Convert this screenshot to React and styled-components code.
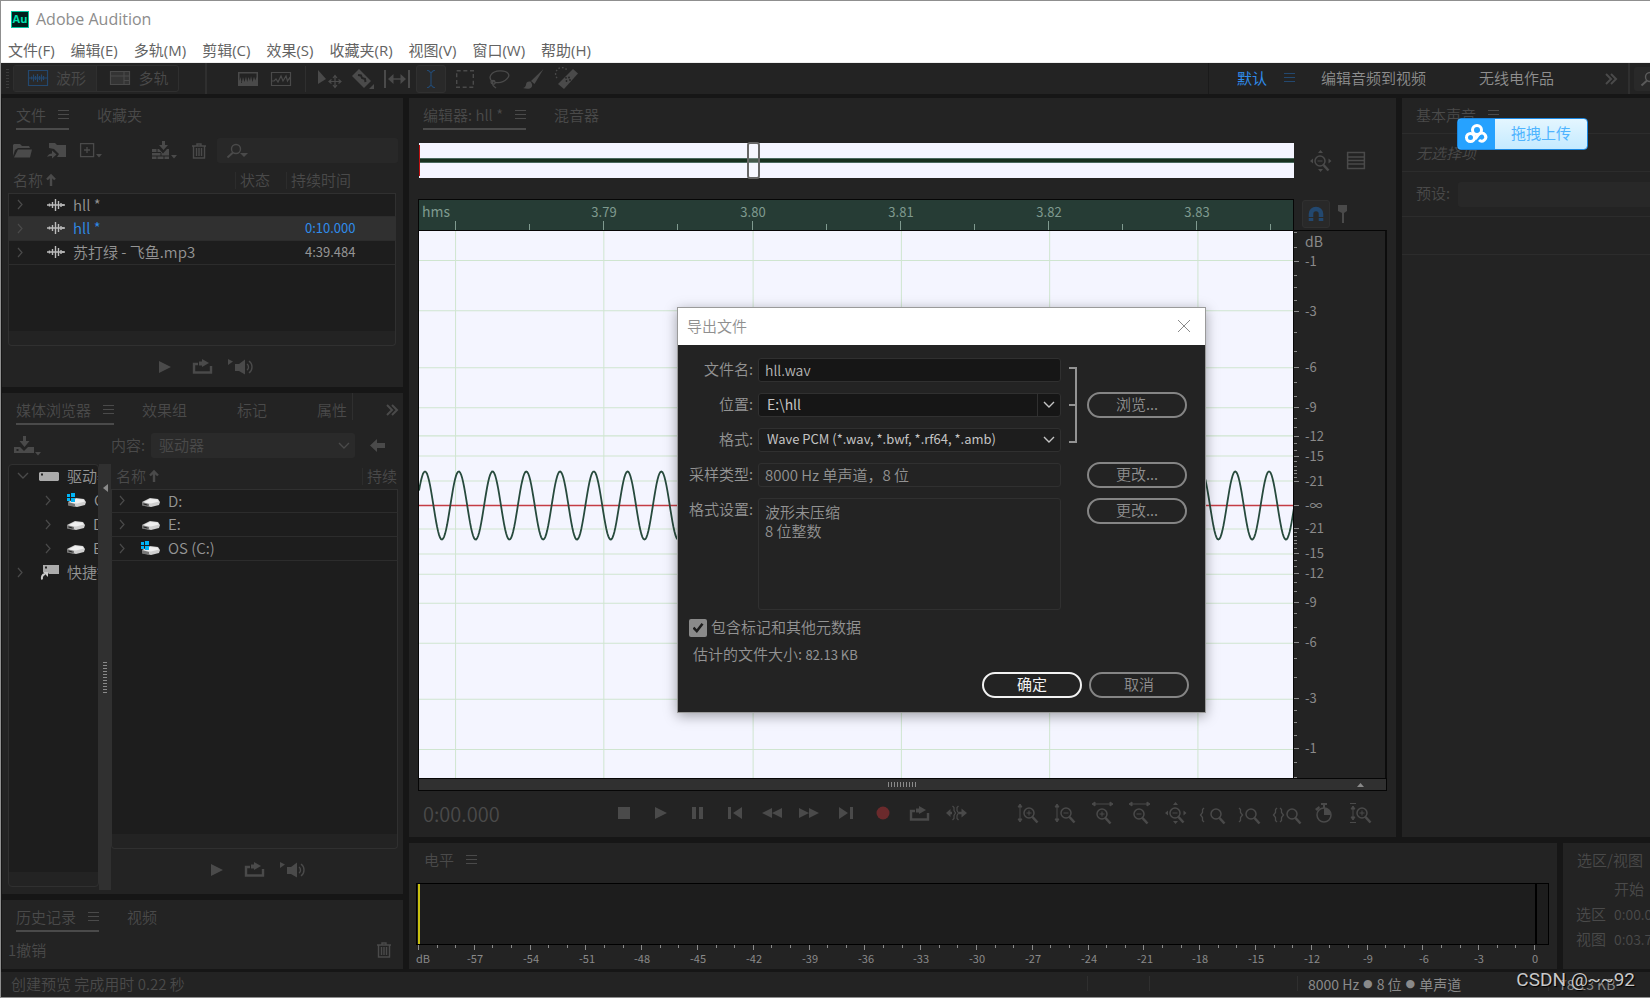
import React, { useState } from 'react'
import styled, { createGlobalStyle, css } from 'styled-components'

const GlobalStyle = createGlobalStyle`
  * {
    box-sizing: border-box;
  }

  body {
    margin: 0;
    background: #161616;
    color: #4a4a4a;
    font-family: "Noto Sans CJK SC", "Noto Sans", sans-serif;
    font-size: 15px;
    font-weight: 350;
    line-height: 20px;
  }

  button, input, select, textarea {
    font: inherit;
    color: inherit;
  }
`

/* ---------- icons ---------- */

const Svg = styled.svg`
  display: block;
  flex: none;
  overflow: visible;
`

const glass = (
  <>
    <circle cx="12" cy="10" r="5" fill="none" stroke="currentColor" strokeWidth="1.5" />
    <path d="M15.5 14l5 5.5" stroke="currentColor" strokeWidth="2.6" fill="none" />
  </>
)
const plus = <path d="M9.5 10h5M12 7.5v5" stroke="currentColor" fill="none" />
const minus = <path d="M9.5 10h5" stroke="currentColor" fill="none" />
const vArrow = <path d="M3 3v14M1 4l2-3 2 3zM1 16l2 3 2-3z" stroke="currentColor" fill="currentColor" />
const hArrow = <path d="M3 1h17M4-1L1 1l3 2zM19-1l3 2-3 2z" stroke="currentColor" fill="currentColor" />

const icons = {
  menu: [11, 11, <path d="M0 1.5h11M0 5.5h11M0 9.5h11" stroke="currentColor" />],
  chevrons: [12, 10, <path d="M1 0l5 5-5 5M6 0l5 5-5 5" fill="none" stroke="currentColor" strokeWidth="2" />],
  right: [5, 9, <path d="M0 0l4 4.500-4 4.500" fill="none" stroke="currentColor" strokeWidth="1.2" />],
  down: [10, 6, <path d="M0 0l5 5 5-5" fill="none" stroke="currentColor" strokeWidth="1.4" />],
  up: [10, 12, <path d="M5 12V2M1 5.500l4-4 4 4" fill="none" stroke="currentColor" strokeWidth="2.4" />],
  waveform: [20, 16, <path d="M.5.5h19v15H.5zM1 8h18M3.500 6.500v3M5.500 4.500v7M7.500 6v4M9.500 4v8M11.500 6v4M13.500 4.500v7M15.500 6v4" fill="none" stroke="currentColor" strokeWidth="1.2" />],
  multitrack: [20, 14, <><path d="M0 0h20v14H0z" fill="currentColor" opacity=".45" /><path d="M.5.5h19v13H.5zM0 5h20M14 5V0M14 9.500h6M14 5v9" fill="none" stroke="currentColor" strokeWidth="1.2" /></>],
  spectral: [20, 14, <path fillRule="evenodd" d="M0 0h20v14H0zM1.500 1.500V9l1-4 1.200 6L5 5l1.500 5L8 4.500l1.200 5.500L10.500 5l1.500 4 1-5 1.500 6L16 4.500l1.200 4L18.500 5V1.500z" fill="currentColor" />],
  pitch: [20, 14, <path d="M.5.5h19v13H.5zM1 9h2l2-2 2 3 3-6 2 5 3-5 1.500 5 2-3 1 2" fill="none" stroke="currentColor" strokeWidth="1.2" />],
  move: [23, 18, <><path d="M0 0v14l8-5z" fill="currentColor" /><path d="M17 6v11M11.500 11.500h11M15 8l2-2.500L19 8M15 15l2 2.500 2-2.500M13.500 9.500l-2.500 2 2.500 2M20.500 9.500l2.500 2-2.500 2" fill="none" stroke="currentColor" strokeWidth="1.2" /></>],
  razor: [22, 20, <><path d="M7 0l12 12-7 7L0 7z" fill="currentColor" /><path d="M6 6l3 .5 1 2.500 3 1 .5 3" fill="none" stroke="#232323" strokeWidth="2" /><path d="M22 15v5h-5z" fill="currentColor" /></>],
  slip: [26, 18, <><path d="M1 0v18M25 0v18" stroke="currentColor" strokeWidth="2" /><path d="M6 9h14" stroke="currentColor" strokeWidth="1.5" /><path d="M9.500 4L4 9l5.500 5zM16.500 4L22 9l-5.500 5z" fill="currentColor" /></>],
  ibeam: [10, 18, <path d="M1 .5h1.500L5 3 7.500.5H9M5 3v12M1 17.500h1.500L5 15l2.500 2.500H9" fill="none" stroke="currentColor" strokeWidth="1.2" />],
  marquee: [18, 18, <path d="M.7.7h16.600v16.600H.7z" fill="none" stroke="currentColor" strokeWidth="1.4" strokeDasharray="4 2.640" />],
  lasso: [21, 18, <path d="M4 12C-2 8 2 1 11 .8c8-.3 11 4.500 7 8-3 3-8 4.500-12 3.500M6 12c0-2-4-2-4 0s4 3 4 1-2-3-2.500 0S6 17 7 18" fill="none" stroke="currentColor" strokeWidth="1.3" />],
  brush: [21, 20, <><path d="M20.500 0L8 12l3.500 3z" fill="currentColor" /><path d="M7.500 12.500C4 12 3 14 3 16c-.5 2-2 3-3 3 6 2 11 0 8.500-5z" fill="currentColor" /></>],
  heal: [22, 20, <><path d="M17 0l5 4.500L8 20l-6-5z" fill="currentColor" /><circle cx="10.500" cy="12" r=".9" fill="#232323" /><circle cx="13" cy="8.500" r=".9" fill="#232323" /><circle cx="14" cy="11" r=".9" fill="#232323" /><circle cx="10" cy="8.800" r=".9" fill="#232323" /><path d="M1 9a6 6 0 0110-8" fill="none" stroke="currentColor" strokeWidth="1.4" strokeDasharray="1.500 2" /></>],
  open: [20, 14, <><path d="M0 12V1l1-1h6l2 2h7l1 2H5L2 6z" fill="currentColor" /><path d="M5 5.500h14l-2 8H1z" fill="currentColor" /></>],
  importFile: [20, 16, <><path d="M2 5V0h6l2 2h9v12h-9l2-3-5-5z" fill="currentColor" /><path d="M0 14c1-2.500 3-3.500 5-3.500V7.500l4.500 4-4.500 4V13c-2 0-3.500 0-5 1z" fill="currentColor" /></>],
  create: [22, 15, <><path d="M.6.6h13v13H.6zM7 4v6M4 7h6" fill="none" stroke="currentColor" strokeWidth="1.3" /><path d="M16 11h6l-3 3.500z" fill="currentColor" /></>],
  insert: [25, 19, <><path d="M0 8h7l4 4.500L15 8h2v10H0z" fill="currentColor" /><path d="M0 11.500h9M0 15h17M5 8v3M9 12v3M12 15v3M5 15v3" stroke="#232323" /><path d="M10 0h3v4h3l-4.500 5L7 4h3z" fill="currentColor" /><path d="M19 14h6l-3 3.500z" fill="currentColor" /></>],
  trash: [14, 16, <path d="M0 3h14M5 3V1h4v2M1.500 3v12h11V3M4.500 5v8M7 5v8M9.500 5v8" fill="none" stroke="currentColor" strokeWidth="1.4" />],
  search: [20, 14, <><circle cx="9" cy="5" r="4.500" fill="none" stroke="currentColor" strokeWidth="1.4" /><path d="M6 8.500L.5 13.500" stroke="currentColor" strokeWidth="2" /><path d="M13 9h8l-4 4z" fill="currentColor" /></>],
  audio: [18, 12, <path d="M0 6h18M2.500 4.500v3M5.500 3v6M8.500 0v12M11.500 2v8M14 4v4M16 5v2" fill="none" stroke="currentColor" strokeWidth="1.4" />],
  play: [12, 12, <path d="M0 0l12 6-12 6z" fill="currentColor" />],
  loop: [19, 15, <><path d="M5 5H1v8.500h17V7" fill="none" stroke="currentColor" strokeWidth="2.4" /><path d="M6 6.500V2.500h3V0l7 4-7 4V6.500z" fill="currentColor" /></>],
  speaker: [26, 16, <><path d="M0 0l5 2.500L0 6zM7 5h4l6-4.500v15L11 12H7z" fill="currentColor" /><path d="M19 5c2 1.500 2 5 0 6M21 2c4 3 4 9 0 12" fill="none" stroke="currentColor" strokeWidth="1.4" /></>],
  save: [27, 19, <><path d="M0 11h6l4 4 4-4h6v6H0z" fill="currentColor" /><path d="M2.500 14h2" stroke="#232323" strokeWidth="2" /><path d="M9 0h3v5h3.500l-5 6-5-6H9z" fill="currentColor" /><path d="M21 16h6l-3 3.500z" fill="currentColor" /></>],
  back: [15, 13, <path d="M0 6.500L7 0v4h8v5H7v4z" fill="currentColor" />],
  drives: [20, 9, <><path d="M1 0h18l1 1v7l-1 1H1L0 8V1z" fill="#ababab" /><path d="M2 2.500h2" stroke="#222" strokeWidth="2" /></>],
  shortcuts: [18, 15, <><path d="M2 0h16v9H8l-2-2H2z" fill="#ababab" /><path d="M4 2.500h2" stroke="#222" strokeWidth="2" /><path d="M1 14.500c-.5-3 1-5 3-5.500" fill="none" stroke="#ccc" strokeWidth="2" /><path d="M2 7h5v5z" fill="#ccc" /></>],
  disk: [18, 12, <><path d="M0 7l8-4 8 1 2 3-1 3-8 2-9-2z" fill="#cfcfcf" /><path d="M1 7.500l7-3.500 7 .500 2 2-8 2z" fill="#efefef" /><path d="M0 7l7 2v3l-7-1.500z" fill="#777" /><path d="M1.500 9l4 1" stroke="#222" /></>],
  osdisk: [19, 14, <><path d="M1 9l8-4 8 1 2 3-1 3-8 2-9-2z" fill="#cfcfcf" /><path d="M2 9.500l7-3.500 7 .500 2 2-8 2z" fill="#efefef" /><path d="M1 9l7 2v3l-7-1.500z" fill="#777" /><path d="M0 1h3v3H0zM4 0h4v4H4zM0 5h3v3H0zM4 5h4v4H4z" fill="#00b4f5" /></>],
  stop: [12, 12, <path d="M0 0h12v12H0z" fill="currentColor" />],
  pause: [11, 12, <path d="M0 0h4v12H0zM7 0h4v12H7z" fill="currentColor" />],
  first: [14, 12, <path d="M0 0h3v12H0zM14 0v12L5 6z" fill="currentColor" />],
  rewind: [20, 10, <path d="M10 0v10L0 5zM20 0v10L10 5z" fill="currentColor" />],
  forward: [20, 10, <path d="M0 0l10 5-10 5zM10 0l10 5-10 5z" fill="currentColor" />],
  last: [14, 12, <path d="M0 0l9 6-9 6zM11 0h3v12h-3z" fill="currentColor" />],
  record: [14, 14, <circle cx="7" cy="7" r="6.500" fill="#6b2a2c" />],
  skip: [21, 14, <><path d="M2 7h4M13 7h4" stroke="currentColor" strokeWidth="2.400" fill="none" /><path d="M4.500 3v8L0 7zM15.500 2.500L21 7l-5.500 4.500z" fill="currentColor" /><path d="M6.500 0l1.500 1.500v3L9.500 7 8 9.500v3L6.500 14M12.500 0L11 1.500v3L12.500 7 11 9.500v3l1.500 1.500" fill="none" stroke="currentColor" strokeWidth="1.200" /></>],
  zoomInV: [22, 20, <>{vArrow}{glass}{plus}</>],
  zoomOutV: [22, 20, <>{vArrow}{glass}{minus}</>],
  zoomInH: [22, 20, <>{hArrow}<g transform="translate(-1 1)">{glass}{plus}</g></>],
  zoomOutH: [22, 20, <>{hArrow}<g transform="translate(-1 1)">{glass}{minus}</g></>],
  zoomFull: [22, 20, <><g transform="translate(-2 0)">{glass}{minus}</g><path d="M8 2l2.500-3L13 2zM8 18l2.500 3 2.500-3zM3 7.500L0 10l3 2.500zM18.500 7.500l3 2.500-3 2.500z" fill="currentColor" /></>],
  zoomLeft: [25, 18, <><g transform="translate(4 0)">{glass}</g><path d="M4 4L2.500 5.500v3L.5 11l2 2.500v3L4 18" fill="none" stroke="currentColor" strokeWidth="1.300" /></>],
  zoomRight: [22, 18, <>{glass}<path d="M0 4l1.500 1.500v3l2 2.500-2 2.500v3L0 18" fill="none" stroke="currentColor" strokeWidth="1.300" /></>],
  zoomSel: [28, 18, <><g transform="translate(7 0)">{glass}</g><path d="M4 4L2.500 5.500v3L.5 11l2 2.500v3L4 18M7 4l1.500 1.500v3l2 2.500-2 2.500v3L7 18" fill="none" stroke="currentColor" strokeWidth="1.300" /></>],
  timer: [18, 20, <><circle cx="9" cy="12" r="7" fill="none" stroke="currentColor" strokeWidth="1.500" /><path d="M9 12V5a7 7 0 017 7zM6 0h6v2h-2v3H8V2H6zM0 6l4-3 1 2-3 3z" fill="currentColor" /></>],
  zoomReset: [22, 20, <><path d="M0 .5h6M0 19.500h6M3 4v12M1 6l2-3 2 3zM1 14l2 3 2-3z" stroke="currentColor" fill="currentColor" />{glass}{plus}</>],
  list: [18, 17, <path d="M.6.6h16.800v15.800H.6zM0 5h18M0 8.500h18M0 12h18" fill="none" stroke="currentColor" strokeWidth="1.500" />],
  magnet: [16, 16, <><path d="M3 15V8a5 5 0 0110 0v7" fill="none" stroke="currentColor" strokeWidth="4.600" /><path d="M0 11.500h6M10 11.500h6" stroke="#292929" /></>],
  pin: [9, 18, <path d="M0 0h9v6L6 8v10H4V8L0 6z" fill="currentColor" />],
  close: [12, 12, <path d="M0 0l12 12M12 0L0 12" stroke="#8a8a8a" />],
  bracket: [8, 76, <path d="M0 1h7v74H0M0 38h7" fill="none" stroke="currentColor" strokeWidth="2" />],
}

const Icon = ({ name }) => {
  const [w, h, body] = icons[name]
  return <Svg width={w} height={h} viewBox={`0 0 ${w} ${h}`} aria-hidden="true">{body}</Svg>
}

/* ---------- shell ---------- */

const Shell = styled.div`
  min-height: 100vh;
  display: flex;
  flex-direction: column;
  border: 1px solid #8f8f8f;
  border-right: 0;
  background: #161616;
  overflow: hidden;
`

const TitleBar = styled.header`
  display: flex;
  align-items: center;
  gap: 7px;
  height: 36px;
  padding-left: 10px;
  background: #fff;
  color: #8c8c8c;
  font: 400 16px/20px "Open Sans", "Noto Sans CJK SC", sans-serif;
`

const Logo = styled.span`
  width: 18px;
  height: 17px;
  border: 1px solid #00c8a0;
  background: #00201c;
  color: #00e0b0;
  font: 700 11px/14px "Open Sans", sans-serif;
  text-align: center;
`

const MenuBar = styled.nav`
  display: flex;
  gap: 16px;
  height: 26px;
  padding-left: 7px;
  background: #fff;
  border-bottom: 1px solid #eee;

  a {
    color: #636363;
    text-decoration: none;
    font: 400 15px/26px "Open Sans", "Noto Sans CJK SC", sans-serif;
  }
`

const ToolBar = styled.div`
  display: flex;
  align-items: center;
  height: 31px;
  margin-bottom: 4px;
  padding-left: 5px;
  background: #232323;
`

const Grip = styled.i`
  width: ${p => p.$w}px;
  height: ${p => p.$h}px;
  background: repeating-linear-gradient(${p => (p.$across ? '90deg' : '180deg')}, ${p => p.$color || '#8a8a8a'} 0 1px, transparent 1px 3px);
`

const ModeGroup = styled.div`
  display: flex;
  margin: 0 26px 0 4px;
  border: 1px solid #2f2f2f;
  border-radius: 3px;
`

const ModeButton = styled.button`
  display: flex;
  align-items: center;
  justify-content: center;
  gap: 8px;
  width: 82px;
  height: 25px;
  padding: 0 0 2px 4px;
  border: 0;
  border-left: ${p => (p.$on ? 0 : 1)}px solid #2f2f2f;
  background: ${p => (p.$on ? '#292929' : 'transparent')};

  svg {
    color: ${p => (p.$on ? '#23486f' : '#4a4a4a')};
  }
`

const Divider = styled.i`
  flex: none;
  width: ${p => p.$w || 1}px;
  height: ${p => p.$h || 26}px;
  background: #2f2f2f;
`

const Tools = styled.div`
  display: flex;
  margin: 0 ${p => p.$right || 0}px 0 ${p => p.$left || 0}px;
`

const IconButton = styled.button`
  display: flex;
  align-items: center;
  justify-content: center;
  flex: none;
  width: ${p => p.$w || 34}px;
  height: ${p => p.$h || 28}px;
  padding: 0 0 0 ${p => p.$push || 0}px;
  border: 0;
  background: none;
  color: #4a4a4a;

  ${p => p.$on && css`
    width: 30px;
    margin: 0 2px;
    border: 1px solid #303030;
    border-radius: 3px;
    background: #292929;
    color: #23486f;
  `}
`

const Workspaces = styled.div`
  display: flex;
  align-items: center;
  height: 100%;
  margin-left: auto;
  border-left: 1px solid #1a1a1a;
  padding-left: 28px;
  color: #8a8a8a;
`

const WorkspaceLink = styled.button`
  display: flex;
  align-items: center;
  gap: 17px;
  padding: 0 0 2px;
  margin-right: ${p => p.$gap}px;
  border: 0;
  background: none;
  color: ${p => (p.$on ? '#2f8ceb' : '#8f8f8f')};
  font-weight: ${p => (p.$on ? 400 : 350)};
  white-space: nowrap;

  svg {
    color: #23486f;
  }
`

const SearchCorner = styled.button`
  width: 16px;
  height: 24px;
  margin-left: 4px;
  padding: 0 0 0 7px;
  border: 0;
  border-radius: 3px 0 0 3px;
  background: #292929;
  color: #5a5a5a;
  overflow: hidden;
`

const Body = styled.main`
  display: flex;
  flex: 1;
  gap: 6px;
  padding-left: 1px;
`

const Column = styled.div`
  display: flex;
  flex-direction: column;
  gap: 6px;
  flex: ${p => (p.$w ? `0 0 ${p.$w}px` : '1 1 0')};
  min-width: 0;
`

const Row = styled.div`
  display: flex;
  gap: 6px;
  flex: ${p => (p.$grow ? '1 1 auto' : '0 0 auto')};
`

const Panel = styled.section`
  display: flex;
  flex-direction: column;
  flex: ${p => p.$flex || '0 0 auto'};
  min-width: 0;
  background: #232323;
  overflow: hidden;
`

const TabBar = styled.div`
  display: flex;
  align-items: flex-start;
  height: 32px;
  flex: none;
  padding-left: ${p => p.$left || 14}px;
`

const TabButton = styled.button`
  display: flex;
  align-items: center;
  gap: 12px;
  height: 32px;
  padding: 3px 0 0;
  margin-right: ${p => p.$gap || 28}px;
  border: 0;
  border-bottom: 2px solid ${p => (p.$on ? '#4a4a4a' : 'transparent')};
  background: none;
  white-space: nowrap;
`

const Tab = ({ label, on, menu, gap }) => (
  <TabButton $on={on} $gap={gap}>
    {label}
    {(on || menu) && <Icon name="menu" />}
  </TabButton>
)

/* ---------- files ---------- */

const FileTools = styled.div`
  display: flex;
  align-items: center;
  margin: 8px 5px 5px 4px;
  height: 25px;

  label {
    display: flex;
    align-items: center;
    flex: 1;
    height: 25px;
    margin-left: 1px;
    padding-left: 10px;
    border-radius: 3px;
    background: #282828;
  }

  input {
    width: 100%;
    min-width: 0;
    border: 0;
    background: none;
  }
`

const Table = styled.table`
  width: 100%;
  border-collapse: separate;
  border-spacing: 0;
  table-layout: fixed;

  th {
    height: 25px;
    padding: 0 0 2px 5px;
    font-weight: 350;
    text-align: left;
    white-space: nowrap;
    background: linear-gradient(#2c2c2c, #2c2c2c) left center / 1px 17px no-repeat;
  }

  th:first-child {
    background: none;
  }

  th svg {
    display: inline-block;
    margin-left: 3px;
  }

  td {
    height: 24px;
    padding: 0 0 1px;
    border-bottom: 1px solid #2c2c2c;
    background: #1d1d1d;
    color: #959595;
    white-space: nowrap;
  }

  tbody tr:first-child td {
    border-top: 1px solid #303030;
  }

  td:first-child {
    border-left: 1px solid #303030;
  }

  td:last-child {
    border-right: 1px solid #303030;
  }
`

const FileRow = styled.tr`
  && td {
    color: ${p => (p.$on ? '#2f8ceb' : '#959595')};
    background: ${p => (p.$on ? '#303030' : '#1d1d1d')};
  }

  td:last-child {
    padding-left: 19px;
    font-size: 13px;
    font-weight: 400;
  }
`

const Cell = styled.span`
  display: flex;
  align-items: center;
  height: 20px;
  padding-left: ${p => p.$left || 9}px;

  > svg:first-child {
    color: #4a4a4a;
    margin-right: ${p => p.$gap}px;
  }

  > svg + svg {
    color: #bbb;
    margin-right: 8px;
  }
`

const BoxFoot = styled.div`
  flex: 1;
  border: 1px solid #303030;
  border-top: 0;
  border-radius: 0 0 4px 4px;
  background: linear-gradient(#1d1d1d, #1d1d1d) top / 100% calc(100% - 14px) no-repeat;
`

const ListBox = styled.div`
  display: flex;
  flex-direction: column;
  flex: 1;
  min-width: 0;
  margin: ${p => p.$margin || 0};
`

const Playback = styled.div`
  display: flex;
  align-items: center;
  justify-content: center;
  height: 41px;
`

const Preview = () => (
  <Playback>
    <IconButton $w={38} aria-label="播放"><Icon name="play" /></IconButton>
    <IconButton $w={38} aria-label="循环"><Icon name="loop" /></IconButton>
    <IconButton $w={38} aria-label="自动播放"><Icon name="speaker" /></IconButton>
  </Playback>
)

const files = [
  { name: 'hll *', time: '' },
  { name: 'hll *', time: '0:10.000', on: true },
  { name: '苏打绿 - 飞鱼.mp3', time: '4:39.484' },
]

const FilesPanel = () => (
  <Panel $flex="0 0 289px">
    <TabBar>
      <Tab label="文件" on />
      <Tab label="收藏夹" />
    </TabBar>
    <FileTools>
      <IconButton aria-label="打开"><Icon name="open" /></IconButton>
      <IconButton aria-label="导入"><Icon name="importFile" /></IconButton>
      <IconButton aria-label="新建"><Icon name="create" /></IconButton>
      <IconButton $w={74} $push={38} aria-label="插入"><Icon name="insert" /></IconButton>
      <IconButton aria-label="删除"><Icon name="trash" /></IconButton>
      <label>
        <Icon name="search" />
        <input aria-label="搜索" />
      </label>
    </FileTools>
    <ListBox $margin="0 7px 0 6px">
      <Table>
        <colgroup>
          <col />
          <col width="51" />
          <col width="110" />
        </colgroup>
        <thead>
          <tr><th>名称<Icon name="up" /></th><th>状态</th><th>持续时间</th></tr>
        </thead>
        <tbody>
          {files.map((f, i) => (
            <FileRow key={i} $on={f.on}>
              <td colSpan={2}><Cell $gap={24}><Icon name="right" /><Icon name="audio" />{f.name}</Cell></td>
              <td>{f.time}</td>
            </FileRow>
          ))}
        </tbody>
      </Table>
      <BoxFoot />
    </ListBox>
    <Preview />
  </Panel>
)

/* ---------- media browser ---------- */

const MediaTools = styled.div`
  display: flex;
  align-items: center;
  height: 25px;
  margin: 8px 18px 6px 11px;

  label {
    margin: 0 6px 0 auto;
    padding-bottom: 2px;
  }

  > button:last-child {
    width: 15px;
  }
`

const SelectWrap = styled.div`
  display: flex;
  align-items: center;
  width: ${p => p.$w || '100%'};
  height: ${p => p.$h || 24}px;
  border: ${p => (p.$plain ? 0 : '1px solid #303030')};
  border-radius: 3px;
  background: ${p => p.$bg || '#1d1d1d'};
  margin-right: ${p => p.$right || 0}px;

  select {
    flex: 1;
    min-width: 0;
    height: 100%;
    padding: 0 8px 2px;
    border: 0;
    appearance: none;
    background: none;
  }

  svg {
    margin: 0 6px;
  }
`

const Split = styled.div`
  display: flex;
  flex: 1;
  margin: 0 5px 4px 6px;
`

const Tree = styled.ul`
  flex: 0 0 91px;
  margin: 0 0 3px;
  padding: 0 0 14px;
  list-style: none;
  border: 1px solid #303030;
  border-radius: 4px;
  background: linear-gradient(#1d1d1d, #1d1d1d) top / 100% calc(100% - 14px) no-repeat;
  color: #959595;
  overflow: hidden;

  li {
    height: 24px;
    padding-top: 1px;
    white-space: nowrap;
  }
`

const Splitter = styled.div`
  display: flex;
  flex-direction: column;
  align-items: center;
  flex: 0 0 12px;
  padding-top: 20px;
  background: #303030;

  i {
    margin-top: 170px;
  }
`

const MediaPanel = () => (
  <Panel $flex="1 1 auto">
    <TabBar>
      <Tab label="媒体浏览器" on gap={28} />
      <Tab label="效果组" gap={50} />
      <Tab label="标记" gap={50} />
      <Tab label="属性" gap={5} />
      <Divider $h={27} />
      <IconButton $w={78} $h={34} aria-label="更多"><Icon name="chevrons" /></IconButton>
    </TabBar>
    <MediaTools>
      <IconButton $w={28} aria-label="导入媒体"><Icon name="save" /></IconButton>
      <label htmlFor="content">内容:</label>
      <SelectWrap $w="204px" $h={25} $plain $bg="#2a2a2a" $right={15}>
        <select id="content"><option>驱动器</option></select>
        <Icon name="down" />
      </SelectWrap>
      <IconButton aria-label="返回"><Icon name="back" /></IconButton>
    </MediaTools>
    <Split>
      <Tree>
        <li><Cell $left={9} $gap={11}><Icon name="down" /><Icon name="drives" />驱动器</Cell></li>
        <li><Cell $left={37} $gap={16}><Icon name="right" /><Icon name="osdisk" />C:</Cell></li>
        <li><Cell $left={37} $gap={16}><Icon name="right" /><Icon name="disk" />D:</Cell></li>
        <li><Cell $left={37} $gap={16}><Icon name="right" /><Icon name="disk" />E:</Cell></li>
        <li><Cell $left={9} $gap={18}><Icon name="right" /><Icon name="shortcuts" />快捷键</Cell></li>
      </Tree>
      <Splitter>
        <Svg width="5" height="8"><path d="M5 0v8L0 4z" fill="#8a8a8a" /></Svg>
        <Grip $w={4} $h={31} />
      </Splitter>
      <Column>
        <ListBox>
          <Table>
            <colgroup>
              <col />
              <col width="36" />
            </colgroup>
            <thead>
              <tr><th>名称<Icon name="up" /></th><th>持续</th></tr>
            </thead>
            <tbody>
              <tr><td colSpan={2}><Cell $left={8} $gap={17}><Icon name="right" /><Icon name="disk" />D:</Cell></td></tr>
              <tr><td colSpan={2}><Cell $left={8} $gap={17}><Icon name="right" /><Icon name="disk" />E:</Cell></td></tr>
              <tr><td colSpan={2}><Cell $left={8} $gap={16}><Icon name="right" /><Icon name="osdisk" />OS (C:)</Cell></td></tr>
            </tbody>
          </Table>
          <BoxFoot />
          <Preview />
        </ListBox>
      </Column>
    </Split>
  </Panel>
)

const HistoryRow = styled.div`
  display: flex;
  align-items: center;
  justify-content: space-between;
  height: 37px;
  padding: 0 10px 1px 6px;
`

/* ---------- editor ---------- */

const EditorGrid = styled.div`
  display: grid;
  grid-template-columns: 1fr 93px;
  grid-template-rows: 35px 53px 1fr 13px;
  flex: 1;
  margin: 13px 9px 0;
`

const Overview = styled.div`
  position: relative;
  border-left: 1px solid #232323;
  background: linear-gradient(#17301f, #17301f) center / 100% 3px no-repeat,
    linear-gradient(#4a685d, #4a685d) center / 100% 5px no-repeat, #f4f5ff;

  &::before {
    content: "";
    position: absolute;
    inset: 2px auto 2px 0;
    width: 1px;
    background: #c01010;
  }
`

const ViewHandle = styled.div`
  position: absolute;
  top: -1px;
  bottom: -1px;
  left: 328px;
  width: 13px;
  border: 2px solid #666;
  border-radius: 3px;
  background: rgba(255, 255, 255, 0.2);
`

const SideIcons = styled.div`
  display: flex;
  align-items: center;
  padding: ${p => p.$pad};
  gap: ${p => p.$gap}px;

  button {
    width: auto;
  }

  button:first-child {
    width: ${p => p.$first || 'auto'};
    margin: 0;
  }
`

const RulerCell = styled.div`
  margin-top: 21px;
`

const Ruler = styled.div`
  height: 32px;
  border: 1px solid #060606;
  background: #263c35;
`

const WaveArea = styled.div`
  border: 1px solid #060606;
  border-width: 0 1px;
  background: #f4f5ff;
  min-width: 0;
  overflow: hidden;
`

const DbArea = styled.div`
  margin-top: -1px;
  border-top: 1px solid #060606;
  border-right: 2px solid #0c0c0c;
`

const ScrollBar = styled.div`
  grid-column: 1 / -1;
  display: flex;
  align-items: center;
  padding-left: 29px;
  border: 1px solid #060606;
  background: #303030;

  svg {
    margin: 0 22px 0 auto;
  }

  i {
    margin-left: auto;
  }
`

const TransportBar = styled.div`
  display: flex;
  align-items: center;
  height: 46px;
  padding: 0 17px 2px 14px;
`

const TimeCode = styled.output`
  flex: 1;
  padding-top: 2px;
  font-size: 20px;
`

const majorX = [36, 184, 333, 481, 629, 777]
const gridY = [29, 79, 136, 176, 204, 224, 249, 297, 322, 342, 371, 411, 467, 517]
const dbMarks = [
  [30, '-1'], [80, '-3'], [136, '-6'], [176, '-9'], [205, '-12'], [225, '-15'], [250, '-21'],
  [274, '-∞'], [297, '-21'], [322, '-15'], [342, '-12'], [371, '-9'], [411, '-6'], [467, '-3'], [517, '-1'],
]
const dbMinor = [1, 16, 44, 56, 69, 101, 120, 151, 165, 187, 196, 212, 219, 230, 235, 239, 242, 246, 301, 305, 309, 312, 317, 329, 335, 351, 360, 382, 396, 427, 446, 479, 491, 504, 531, 546]

// sine tone: 33.7px period, first crest at x=6
const tone = Array.from({ length: 876 }, (_, x) =>
  `${x ? 'L' : 'M'}${x} ${(274 - 34 * Math.cos((2 * Math.PI * (x - 6)) / 33.7)).toFixed(1)}`).join('')

const AxisText = styled.text`
  fill: ${p => p.$fill || '#8a8a8a'};
  font-size: ${p => p.$size || 13}px;
  font-weight: 400;
`

const Chart = styled.svg`
  display: block;
  width: 100%;
  height: 100%;
`

const transport = ['stop', 'play', 'pause', 'first', 'rewind', 'forward', 'last', 'record', 'loop', 'skip']
const zooms = ['zoomInV', 'zoomOutV', 'zoomInH', 'zoomOutH', 'zoomFull', 'zoomLeft', 'zoomRight', 'zoomSel', 'timer', 'zoomReset']

const TimeRuler = () => (
  <Ruler>
    <Chart viewBox="0 0 874 30" preserveAspectRatio="xMinYMid slice">
      <AxisText x="3" y="17" $fill="#7f9a8f" $size={14}>hms</AxisText>
      {majorX.map((x, i) => (
        <g key={x}>
          <path d={`M${x}.5 21v9M${x + 74}.5 24v6`} stroke="#7f9a8f" />
          {i > 0 && <AxisText x={x + 1} y="17" textAnchor="middle" $fill="#7f9a8f">{(3.78 + i / 100).toFixed(2)}</AxisText>}
        </g>
      ))}
    </Chart>
  </Ruler>
)

const Wave = () => (
  <Chart viewBox="0 0 874 546" preserveAspectRatio="xMinYMin slice">
    {gridY.map(y => <path key={y} d={`M0 ${y}.5h875`} stroke="#cfe5d0" />)}
    {majorX.map(x => <path key={x} d={`M${x}.5 0v547`} stroke="#cfe5d0" />)}
    <path d="M0 274h875" stroke="#c43c44" strokeWidth="1.5" />
    <path d={tone} fill="none" stroke="#274a3d" strokeWidth="1.8" />
  </Chart>
)

const DbScale = () => (
  <Chart viewBox="0 0 91 547" preserveAspectRatio="xMinYMin slice">
    <AxisText x="11" y="16" $size={14}>dB</AxisText>
    {dbMarks.map(([y, t]) => (
      <g key={y}>
        <path d={`M0 ${y}.5h5`} stroke="#8a8a8a" />
        <AxisText x="11" y={y + 5}>{t}</AxisText>
      </g>
    ))}
    {dbMinor.map(y => <path key={y} d={`M0 ${y}.5h3`} stroke="#8a8a8a" />)}
  </Chart>
)

const EditorPanel = () => (
  <Panel $flex="1 1 0">
    <TabBar>
      <Tab label="编辑器: hll *" on />
      <Tab label="混音器" />
    </TabBar>
    <EditorGrid>
      <Overview><ViewHandle /></Overview>
      <SideIcons $pad="0 0 0 16px" $gap={15}>
        <IconButton aria-label="全部缩小"><Icon name="zoomFull" /></IconButton>
        <IconButton aria-label="列表"><Icon name="list" /></IconButton>
      </SideIcons>
      <RulerCell><TimeRuler /></RulerCell>
      <RulerCell>
        <SideIcons $pad="1px 0 0 8px" $gap={8} $first="28px">
          <IconButton $on aria-label="对齐"><Icon name="magnet" /></IconButton>
          <IconButton aria-label="标记"><Icon name="pin" /></IconButton>
        </SideIcons>
      </RulerCell>
      <WaveArea><Wave /></WaveArea>
      <DbArea><DbScale /></DbArea>
      <ScrollBar>
        <Grip $w={30} $h={5} $across />
        <Svg width="7" height="4"><path d="M0 4l3.500-4L7 4z" fill="#8a8a8a" /></Svg>
      </ScrollBar>
    </EditorGrid>
    <TransportBar>
      <TimeCode>0:00.000</TimeCode>
      <Tools $right={34}>
        {transport.map(n => <IconButton key={n} $w={37} aria-label={n}><Icon name={n} /></IconButton>)}
      </Tools>
      <Tools>
        {zooms.map(n => <IconButton key={n} $w={37} aria-label={n}><Icon name={n} /></IconButton>)}
      </Tools>
    </TransportBar>
  </Panel>
)

/* ---------- essential sound, levels, selection ---------- */

const SoundRow = styled.div`
  display: flex;
  align-items: center;
  gap: 8px;
  height: ${p => p.$h}px;
  padding: 0 0 0 14px;
  border-bottom: 1px solid #2c2c2c;

  em {
    font-style: oblique;
  }

  label {
    padding-bottom: 3px;
  }

  select {
    flex: 1;
    height: 25px;
    border: 0;
    border-radius: 3px 0 0 3px;
    appearance: none;
    background: #282828;
  }
`

const Meter = styled.div`
  height: 62px;
  margin: 8px 8px 0 7px;
  border: 1px solid #000;
  background: linear-gradient(#000, #000) right 11px top / 2px 100% no-repeat, #1d1d1d;

  &::before {
    content: "";
    display: block;
    width: 2px;
    height: 100%;
    margin-left: 1px;
    background: #c8c010;
  }
`

const MeterScale = styled.div`
  height: 24px;
  margin: 0 8px 0 7px;
`

const LevelsPanel = () => (
  <Panel $flex="1 1 0">
    <TabBar $left={15}>
      <Tab label="电平" menu />
    </TabBar>
    <Meter />
    <MeterScale>
      <Chart viewBox="0 0 1133 24" preserveAspectRatio="xMinYMid slice">
        {Array.from({ length: 61 }, (_, i) => (
          <path key={i} d={`M${Math.round(2 + i * 18.6)}.5 0v${i % 3 ? 3 : 5}`} stroke="#8a8a8a" />
        ))}
        <AxisText x="0" y="18" $size={11}>dB</AxisText>
        {Array.from({ length: 20 }, (_, i) => (
          <AxisText key={i} x={Math.round(59 + i * 55.8)} y="18" textAnchor="middle" $size={11}>{-57 + i * 3}</AxisText>
        ))}
      </Chart>
    </MeterScale>
  </Panel>
)

const SelectionList = styled.dl`
  display: grid;
  grid-template-columns: 30px 60px;
  gap: 5px 8px;
  margin: 0;
  padding: 4px 0 0 13px;

  dt, dd {
    margin: 0;
    white-space: nowrap;
  }

  dd {
    font-size: 14px;
  }

  dd:first-of-type {
    grid-column: 2;
    font-size: 15px;
  }
`

/* ---------- status bar ---------- */

const StatusBar = styled.footer`
  position: relative;
  display: flex;
  align-items: center;
  height: 25px;
  margin-top: 3px;
  padding: 0 0 2px 10px;
  background: #232323;
`

const StatusSlot = styled.span`
  display: flex;
  align-items: center;
  gap: 4px;
  width: ${p => p.$w}px;
  height: 15px;
  margin-left: ${p => p.$auto && 'auto'};
  padding-left: 10px;
  border-left: 1px solid #2f2f2f;
  color: #8a8a8a;
  font-weight: 400;
  font-size: 14px;
  white-space: nowrap;
`

const Dot = styled.span`
  font: 11px/15px "DejaVu Sans", sans-serif;
`

const Watermark = styled.span`
  position: absolute;
  right: 15px;
  bottom: 3px;
  color: #c8c8c8;
  text-shadow: 1px 1px 1px #000;
  font: 400 19px/28px Roboto, "Noto Sans CJK SC", sans-serif;
`

/* ---------- overlays ---------- */

const UploadBadge = styled.button`
  position: absolute;
  top: 118px;
  left: 1457px;
  display: flex;
  width: 131px;
  height: 32px;
  padding: 0;
  border: 1px solid #1b87e0;
  border-radius: 4px;
  background: linear-gradient(#e4f6ff, #c4eaff);
  color: #4fb4ff;
  overflow: hidden;

  i {
    display: flex;
    align-items: center;
    justify-content: center;
    width: 37px;
    height: 100%;
    background: #26a2ff;
  }

  span {
    flex: 1;
    line-height: 28px;
    font-weight: 400;
  }
`

const Dialog = styled.form`
  position: absolute;
  top: 307px;
  left: 677px;
  width: 529px;
  border: 1px solid #9a9a9a;
  background: #232323;
  color: #939393;
  box-shadow: 0 3px 12px rgba(0, 0, 0, 0.35);
`

const DialogTitle = styled.div`
  display: flex;
  align-items: center;
  justify-content: space-between;
  height: 37px;
  padding: 0 4px 2px 9px;
  background: #fff;
  color: #8f8f8f;
`

const Fields = styled.div`
  display: grid;
  grid-template-columns: 75px 303px 16px 100px;
  grid-template-rows: repeat(4, 24px) 112px;
  gap: 11px 5px;
  padding-top: 13px;

  > label {
    grid-column: 1;
    height: 24px;
    line-height: 21px;
    text-align: right;
    white-space: nowrap;
  }
`

const fieldBox = css`
  grid-column: 2;
  width: 100%;
  border: 1px solid #303030;
  border-radius: 3px;
  background: ${p => (p.readOnly ? '#232323' : '#161616')};
  outline: 0;
`

const TextField = styled.input`
  ${fieldBox}
  height: 24px;
  padding: 0 6px 1px;
  color: ${p => (p.readOnly ? '#939393' : '#b5b5b5')};
  font-size: ${p => (p.readOnly ? 15 : 14)}px;
`

const TextArea = styled.textarea`
  ${fieldBox}
  height: 112px;
  padding: 3px 6px;
  line-height: 19px;
  resize: none;
`

const DialogSelect = styled(SelectWrap)`
  grid-column: 2;
  color: #c4c4c4;

  select {
    font-size: ${p => (p.$split ? 14 : 13)}px;
    font-weight: 400;
    border-right: ${p => (p.$split ? '1px solid #303030' : 0)};
  }
`

const BracketCell = styled.span`
  grid-area: 1 / 3 / 4 / 4;
  padding: 9px 0 0 3px;
`

const PillButton = styled.button`
  grid-column: 4;
  align-self: ${p => (p.$top ? 'start' : 'center')};
  width: 100px;
  height: 26px;
  padding: 0 0 3px;
  border: 2px solid ${p => (p.$primary ? '#f2f2f2' : '#858585')};
  border-radius: 13px;
  background: none;
  color: ${p => (p.$primary ? '#f2f2f2' : '#8f8f8f')};
  font-weight: ${p => (p.$primary ? 400 : 350)};
  line-height: 19px;
`

const CheckLabel = styled.label`
  display: flex;
  align-items: center;
  gap: 4px;
  height: 18px;
  margin: 9px 0 6px 11px;

  input {
    appearance: none;
    width: 18px;
    height: 18px;
    margin: 0;
    border-radius: 2px;
    background: #8a8a8a;
    display: grid;
    place-items: center;
  }

  input:checked::before {
    content: "";
    width: 11px;
    height: 10px;
    background: #1c1c1c;
    clip-path: polygon(0 55%, 18% 38%, 38% 62%, 82% 0, 100% 14%, 40% 100%);
  }

  span {
    padding-bottom: 2px;
  }
`

const Estimate = styled.p`
  margin: 0 0 6px 15px;
  line-height: 22px;

  span {
    font-size: 13px;
    font-weight: 400;
  }
`

const Actions = styled.div`
  display: flex;
  justify-content: flex-end;
  gap: 7px;
  padding: 0 16px 14px;
`

const ExportDialog = () => {
  const [name, setName] = useState('hll.wav')
  const [markers, setMarkers] = useState(true)
  return (
    <Dialog role="dialog" aria-label="导出文件" onSubmit={e => e.preventDefault()}>
      <DialogTitle>
        导出文件
        <IconButton type="button" aria-label="关闭"><Icon name="close" /></IconButton>
      </DialogTitle>
      <Fields>
        <label htmlFor="name">文件名:</label>
        <TextField id="name" value={name} onChange={e => setName(e.target.value)} />
        <BracketCell><Icon name="bracket" /></BracketCell>
        <label htmlFor="place">位置:</label>
        <DialogSelect $bg="#161616" $split>
          <select id="place"><option>E:\hll</option></select>
          <Icon name="down" />
        </DialogSelect>
        <PillButton type="button">浏览...</PillButton>
        <label htmlFor="format">格式:</label>
        <DialogSelect>
          <select id="format"><option>Wave PCM (*.wav, *.bwf, *.rf64, *.amb)</option></select>
          <Icon name="down" />
        </DialogSelect>
        <label htmlFor="sample">采样类型:</label>
        <TextField id="sample" readOnly value="8000 Hz 单声道，8 位" />
        <PillButton type="button">更改...</PillButton>
        <label htmlFor="settings">格式设置:</label>
        <TextArea id="settings" readOnly value={'波形未压缩\n8 位整数'} />
        <PillButton type="button" $top>更改...</PillButton>
      </Fields>
      <CheckLabel>
        <input type="checkbox" checked={markers} onChange={e => setMarkers(e.target.checked)} />
        <span>包含标记和其他元数据</span>
      </CheckLabel>
      <Estimate>估计的文件大小: <span>82.13 KB</span></Estimate>
      <Actions>
        <PillButton $primary>确定</PillButton>
        <PillButton type="button">取消</PillButton>
      </Actions>
    </Dialog>
  )
}

/* ---------- app ---------- */

const menus = ['文件(F)', '编辑(E)', '多轨(M)', '剪辑(C)', '效果(S)', '收藏夹(R)', '视图(V)', '窗口(W)', '帮助(H)']
const tools = ['move', 'razor', 'slip', 'ibeam', 'marquee', 'lasso', 'brush', 'heal']

const App = () => (
  <Shell>
    <GlobalStyle />
    <TitleBar><Logo>Au</Logo>Adobe Audition</TitleBar>
    <MenuBar>{menus.map(m => <a key={m} href="#menu">{m}</a>)}</MenuBar>
    <ToolBar>
      <Grip $w={3} $h={20} $color="#3a3a3a" />
      <ModeGroup>
        <ModeButton $on><Icon name="waveform" />波形</ModeButton>
        <ModeButton><Icon name="multitrack" />多轨</ModeButton>
      </ModeGroup>
      <Divider $w={2} $h={31} />
      <Tools $left={24} $right={8}>
        <IconButton $w={33} aria-label="频谱"><Icon name="spectral" /></IconButton>
        <IconButton $w={33} aria-label="音高"><Icon name="pitch" /></IconButton>
      </Tools>
      <Divider />
      <Tools $left={6}>
        {tools.map(t => <IconButton key={t} $on={t === 'ibeam'} aria-label={t}><Icon name={t} /></IconButton>)}
      </Tools>
      <Workspaces>
        <WorkspaceLink $on $gap={26}>默认<Icon name="menu" /></WorkspaceLink>
        <WorkspaceLink $gap={53}>编辑音频到视频</WorkspaceLink>
        <WorkspaceLink $gap={40}>无线电作品</WorkspaceLink>
        <IconButton aria-label="更多工作区"><Icon name="chevrons" /></IconButton>
        <Divider $w={2} $h={31} />
        <SearchCorner aria-label="搜索帮助"><Icon name="search" /></SearchCorner>
      </Workspaces>
    </ToolBar>
    <Body>
      <Column $w={401}>
        <FilesPanel />
        <MediaPanel />
        <Panel>
          <TabBar>
            <Tab label="历史记录" on />
            <Tab label="视频" />
          </TabBar>
          <HistoryRow>
            <span>1撤销</span>
            <IconButton $w={19} aria-label="清除历史"><Icon name="trash" /></IconButton>
          </HistoryRow>
        </Panel>
      </Column>
      <Column>
        <Row $grow>
          <EditorPanel />
          <Panel $flex="0 0 248px">
            <TabBar><Tab label="基本声音" menu /></TabBar>
            <SoundRow $h={4} />
            <SoundRow $h={38}><em>无选择项</em></SoundRow>
            <SoundRow $h={45}>
              <label htmlFor="preset">预设:</label>
              <select id="preset" />
            </SoundRow>
            <SoundRow $h={38} />
          </Panel>
        </Row>
        <Row>
          <LevelsPanel />
          <Panel $flex="0 0 87px">
            <TabBar><Tab label="选区/视图" /></TabBar>
            <SelectionList>
              <dd>开始</dd>
              <dt>选区</dt><dd>0:00.000</dd>
              <dt>视图</dt><dd>0:03.778</dd>
            </SelectionList>
          </Panel>
        </Row>
      </Column>
    </Body>
    <StatusBar>
      创建预览 完成用时 0.22 秒
      <StatusSlot $w={62} $auto />
      <StatusSlot $w={148} />
      <StatusSlot $w={251}>8000 Hz <Dot>●</Dot> 8 位 <Dot>●</Dot> 单声道</StatusSlot>
      <StatusSlot $w={102}>78.13 KB</StatusSlot>
      <Watermark>CSDN @~~92</Watermark>
    </StatusBar>
    <UploadBadge>
      <i>
        <Svg width="24" height="20" fill="none" stroke="#fff" strokeWidth="3">
          <circle cx="12" cy="6" r="4.500" />
          <circle cx="5.500" cy="13.500" r="4" />
          <path d="M10 15c2-1 2-4 5-5.500a4 4 0 11-1 6.500" />
        </Svg>
      </i>
      <span>拖拽上传</span>
    </UploadBadge>
    <ExportDialog />
  </Shell>
)

export default App
